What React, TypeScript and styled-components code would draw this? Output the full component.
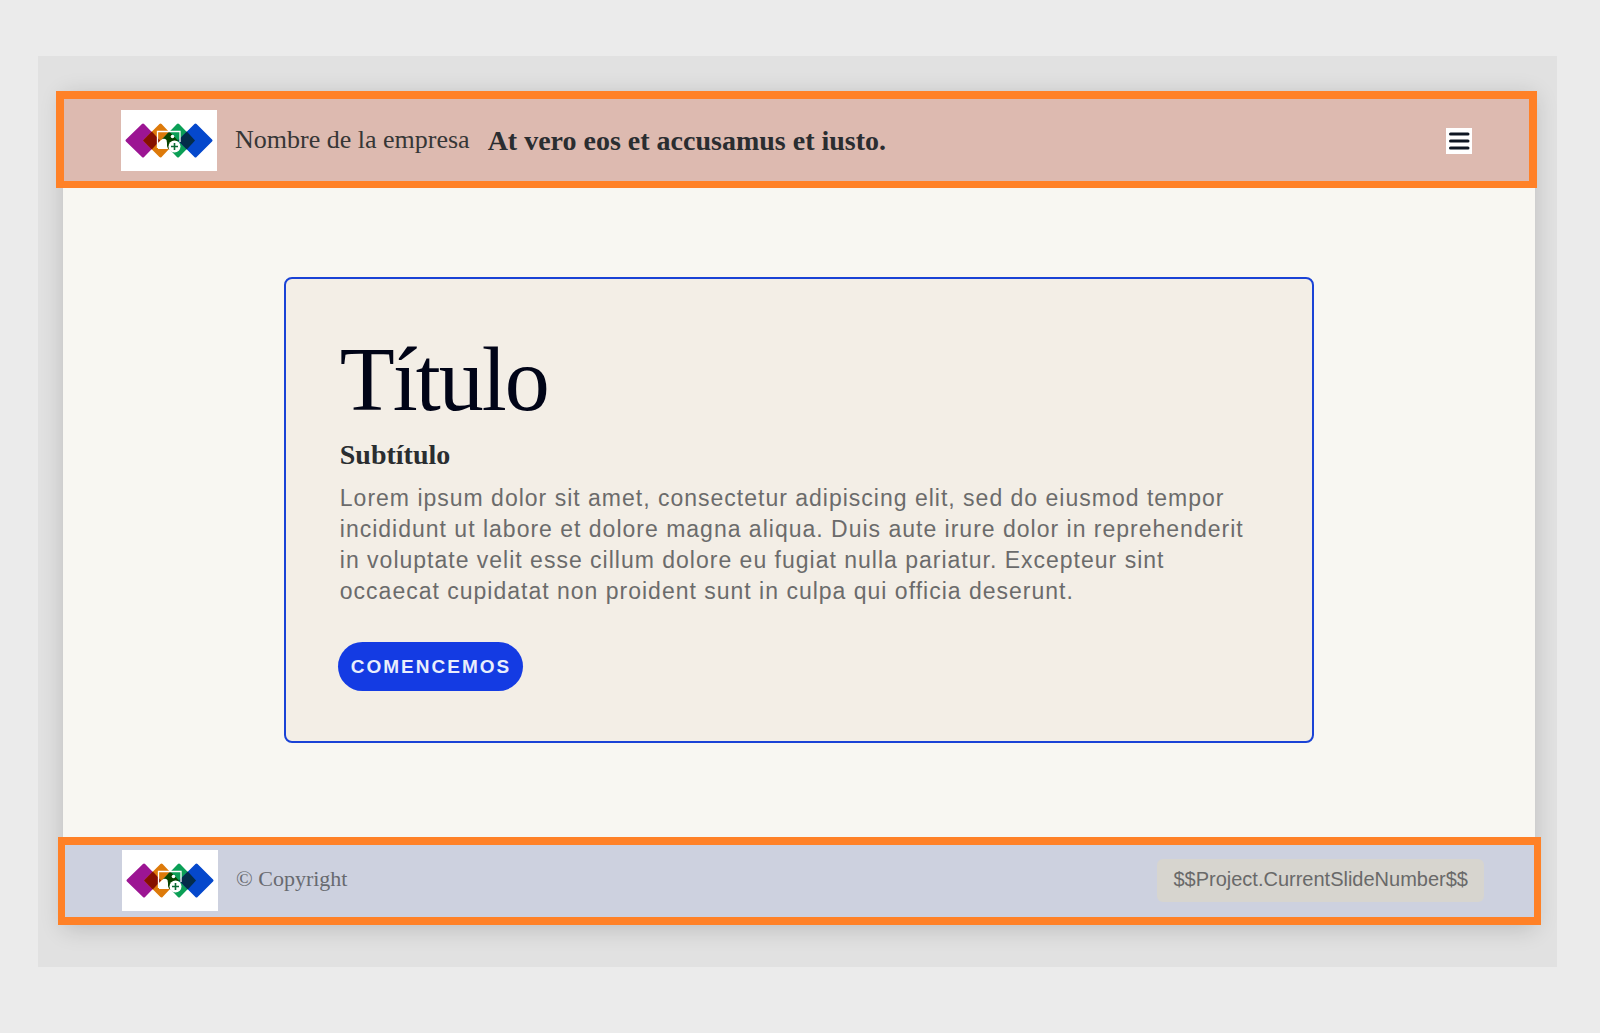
import React from "react";
import styled, { createGlobalStyle } from "styled-components";

const serif = `"Liberation Serif", Georgia, serif`;
const sans = `"Liberation Sans", Arial, sans-serif`;

const GlobalStyle = createGlobalStyle`
  *, *::before, *::after { box-sizing: border-box; }
  body { margin: 0; background: #ebebeb; font-family: ${sans}; }
  h1, h2, p { margin: 0; }
`;

const Page = styled.div`
  display: flex;
  min-height: 100vh;
  padding: 56px 43px 66px 38px;
`;

const Workspace = styled.div`
  display: flex;
  flex: 1;
  min-width: 0;
  padding: 35px 22px 42px 25px;
  background: #e1e1e1;
`;

const Slide = styled.div`
  display: flex;
  flex: 1;
  flex-direction: column;
  min-width: 0;
  background: #f8f7f2;
  box-shadow: 0 4px 22px rgba(0, 0, 0, 0.16);
`;

const Header = styled.header`
  display: flex;
  align-items: center;
  gap: 18px;
  margin: 0 -2px 0 -7px;
  padding: 11px 57px 10px;
  border: 8px solid #ff8127;
  border-bottom-width: 7px;
  background: #ddbab0;
`;

const Footer = styled.footer`
  display: flex;
  align-items: center;
  gap: 18px;
  margin: 0 -6px 0 -5px;
  padding: 5px 50px 6px 57px;
  border: 8px solid #ff8127;
  border-right-width: 7px;
  border-left-width: 7px;
  background: #cdd1df;
`;

const LogoBox = styled.div`
  flex: none;
  width: 96px;
  height: 61px;
  background: #fff;

  svg { display: block; }
`;

const Company = styled.span`
  padding-bottom: 2px;
  color: #363636;
  font: 26px/32px ${serif};
`;

const SlideTitle = styled.span`
  color: #2a2d30;
  font: bold 28px/32px ${serif};
`;

const MenuButton = styled.button`
  display: block;
  width: 26px;
  height: 26px;
  margin-left: auto;
  padding: 0;
  border: 0;
  background: #fff;
  cursor: pointer;

  svg { display: block; }
`;

const Copyright = styled.span`
  padding-bottom: 4px;
  color: #686a70;
  font: 22px/28px ${serif};
`;

const SlideNumber = styled.span`
  margin-left: auto;
  padding: 6px 16px 9px;
  border-radius: 6px;
  background: #d7d5cf;
  color: #696969;
  font: 20px/28px ${sans};
`;

const Main = styled.main`
  display: flex;
  flex: 1;
  align-items: center;
  justify-content: center;
  padding: 89px 0 94px;
`;

const Card = styled.section`
  align-self: stretch;
  width: 70%;
  padding: 52px 54px 50px;
  border: 2px solid #1a43d6;
  border-radius: 8px;
  background: #f3eee6;
`;

const Title = styled.h1`
  color: #000417;
  font: 90px/98px ${serif};
  letter-spacing: -2px;
`;

const Subtitle = styled.h2`
  margin-top: 10px;
  color: #2a2d30;
  font: bold 28px/32px ${serif};
`;

const Body = styled.p`
  margin-top: 12px;
  color: #6b6b6b;
  font: 23px/31px ${sans};
  letter-spacing: 1px;
`;

const StartButton = styled.button`
  display: block;
  height: 49px;
  margin: 35px 0 0 -2px;
  padding: 0 12px 0 13px;
  border: 0;
  border-radius: 25px;
  background: #143be3;
  color: #e9eefc;
  font: bold 19px/24px ${sans};
  letter-spacing: 2px;
  cursor: pointer;
`;

function Logo() {
  return (
    <LogoBox>
      <svg width="96" height="61" viewBox="0 0 96 61" role="img" aria-label="Logo">
        <g strokeWidth="3" strokeLinejoin="round">
          <path d="M22 15 37 30.500 22 46 6 30.500Z" fill="#9c1593" stroke="#9c1593" />
          <path d="M39.500 15 54 30.500 39.500 46 24 30.500Z" fill="#dd7a0a" stroke="#dd7a0a" />
          <path d="M57 15 72 30.500 57 46 42 30.500Z" fill="#0b9f56" stroke="#0b9f56" />
          <path d="M74.500 15 90 30.500 74.500 46 59 30.500Z" fill="#0548cc" stroke="#0548cc" />
        </g>
        <path d="M30.800 21.500 39 30.500 30.800 39.500 22 30.500Z" fill="#861000" />
        <path d="M48.200 21.500 57 30.500 48.200 39.500 40 30.500Z" fill="#064300" />
        <path d="M65.800 21.500 74 30.500 65.800 39.500 57 30.500Z" fill="#032c4a" />
        <path d="M36.500 38V21.500H59V32" fill="none" stroke="#fff" strokeWidth="1.300" />
        <path d="M37 39V33L40 30Q43 27.500 45.500 30L46 33Q45.500 36 47 39Z" fill="#fff" />
        <circle cx="51.500" cy="26.500" r="1.800" fill="#fff" />
        <circle cx="53.500" cy="36.500" r="6" fill="#fff" />
        <path d="M53.500 33V40M50 36.500H57" stroke="#0b6b35" strokeWidth="1.600" />
      </svg>
    </LogoBox>
  );
}

function MenuIcon() {
  return (
    <svg width="26" height="26" viewBox="0 0 26 26" aria-hidden="true">
      <path d="M4.500 6H22M4.500 13H22M4.500 20H22" stroke="#0e1622" strokeWidth="3" strokeLinecap="round" />
    </svg>
  );
}

export default function App() {
  return (
    <>
      <GlobalStyle />
      <Page>
        <Workspace>
          <Slide>
            <Header>
              <Logo />
              <Company>Nombre de la empresa</Company>
              <SlideTitle>At vero eos et accusamus et iusto.</SlideTitle>
              <MenuButton type="button" aria-label="Menú">
                <MenuIcon />
              </MenuButton>
            </Header>
            <Main>
              <Card>
                <Title>Título</Title>
                <Subtitle>Subtítulo</Subtitle>
                <Body>
                  Lorem ipsum dolor sit amet, consectetur adipiscing elit, sed do eiusmod tempor
                  incididunt ut labore et dolore magna aliqua. Duis aute irure dolor in
                  reprehenderit in voluptate velit esse cillum dolore eu fugiat nulla pariatur.
                  Excepteur sint occaecat cupidatat non proident sunt in culpa qui officia deserunt.
                </Body>
                <StartButton type="button">COMENCEMOS</StartButton>
              </Card>
            </Main>
            <Footer>
              <Logo />
              <Copyright>© Copyright</Copyright>
              <SlideNumber>$$Project.CurrentSlideNumber$$</SlideNumber>
            </Footer>
          </Slide>
        </Workspace>
      </Page>
    </>
  );
}
